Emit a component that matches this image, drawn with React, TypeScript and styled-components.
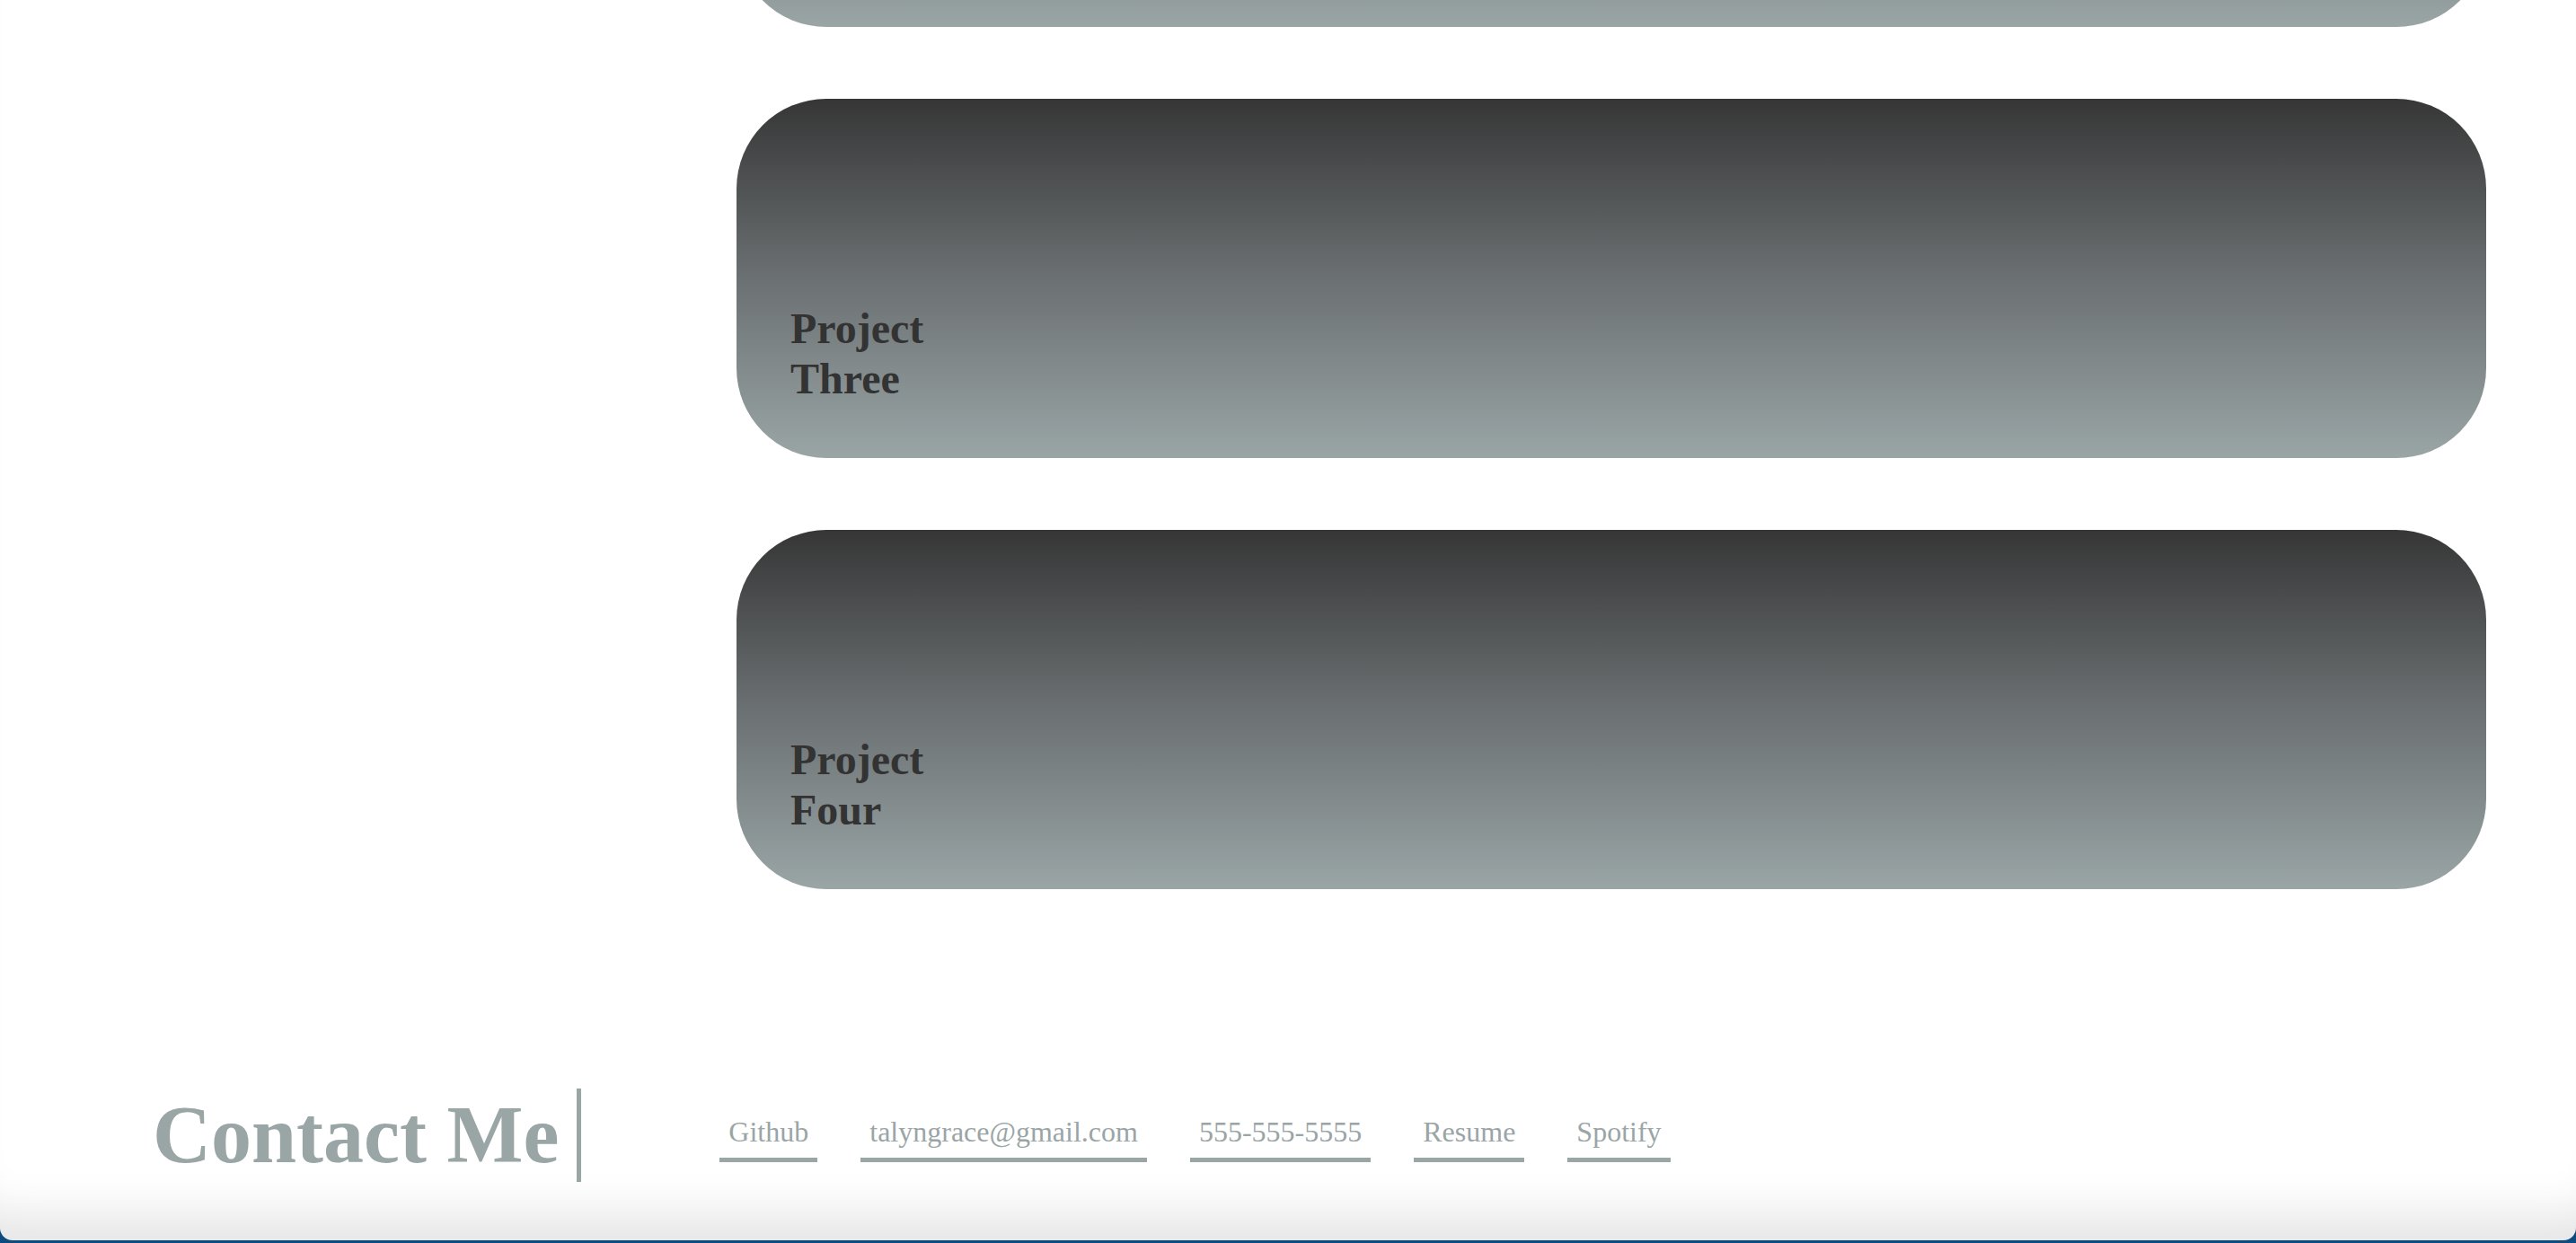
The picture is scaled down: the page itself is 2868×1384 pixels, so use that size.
import * as React from 'react';
import styled, { createGlobalStyle } from 'styled-components';

const concrete = '#9aa5a6';

// the first card is scrolled past the top of the view, only its foot shows
const projects = ['', 'Project Three', 'Project Four'];
const links = ['Github', 'talyngrace@gmail.com', '555-555-5555', 'Resume', 'Spotify'];

const App = () => {
  return (
    <>
      <GlobalStyle />
      <Page>
        <Projects>
          {projects.map((name, i) => (
            <Card key={i}>{name && <CardTitle>{name}</CardTitle>}</Card>
          ))}
        </Projects>
        <Footer>
          <Heading>Contact Me</Heading>
          <LinkRow>
            {links.map((l) => (
              <ContactLink key={l}>{l}</ContactLink>
            ))}
          </LinkRow>
        </Footer>
      </Page>
    </>
  );
};

//------------STYLED------------
const GlobalStyle = createGlobalStyle`
  html, body {
    margin: 0;
    padding: 0;
    background: #0d4a7d;
    overflow: hidden;
  }
  * {
    box-sizing: border-box;
  }
`;

const Page = styled.div`
  height: 1381px;
  background: #ffffff;
  border-radius: 0 0 14px 14px;
  overflow: hidden;
  display: flex;
  flex-direction: column;
  font-family: 'Liberation Serif', 'Times New Roman', serif;
  box-shadow: inset 0 -70px 50px -40px rgba(0, 0, 0, 0.1);
`;

const Projects = styled.section`
  display: flex;
  flex-direction: column;
  gap: 80px;
  padding: 0 100px 0 820px;
  margin-top: -370px;
`;

const Card = styled.div`
  height: 400px;
  border-radius: 100px;
  background: linear-gradient(to bottom, #363636 0%, #6b7072 50%, #9aa5a6 100%);
  display: flex;
  flex-direction: column;
  justify-content: flex-end;
  padding: 0 60px 60px;
`;

const CardTitle = styled.h2`
  margin: 0;
  width: 150px;
  font-size: 48px;
  font-weight: bold;
  line-height: 56px;
  color: #333333;
`;

const Footer = styled.footer`
  display: flex;
  align-items: center;
  margin-top: 222px;
  padding-left: 170px;
`;

const Heading = styled.h1`
  margin: 0;
  height: 104px;
  padding-right: 20px;
  border-right: 5px solid ${concrete};
  font-size: 90px;
  line-height: 104px;
  font-weight: bold;
  color: ${concrete};
`;

const LinkRow = styled.nav`
  display: flex;
  gap: 48px;
  margin-left: 154px;
  padding-top: 8px;
`;

const ContactLink = styled.span`
  padding: 0 10px 10px;
  border-bottom: 5px solid ${concrete};
  font-size: 32px;
  color: ${concrete};
`;

export default App;
